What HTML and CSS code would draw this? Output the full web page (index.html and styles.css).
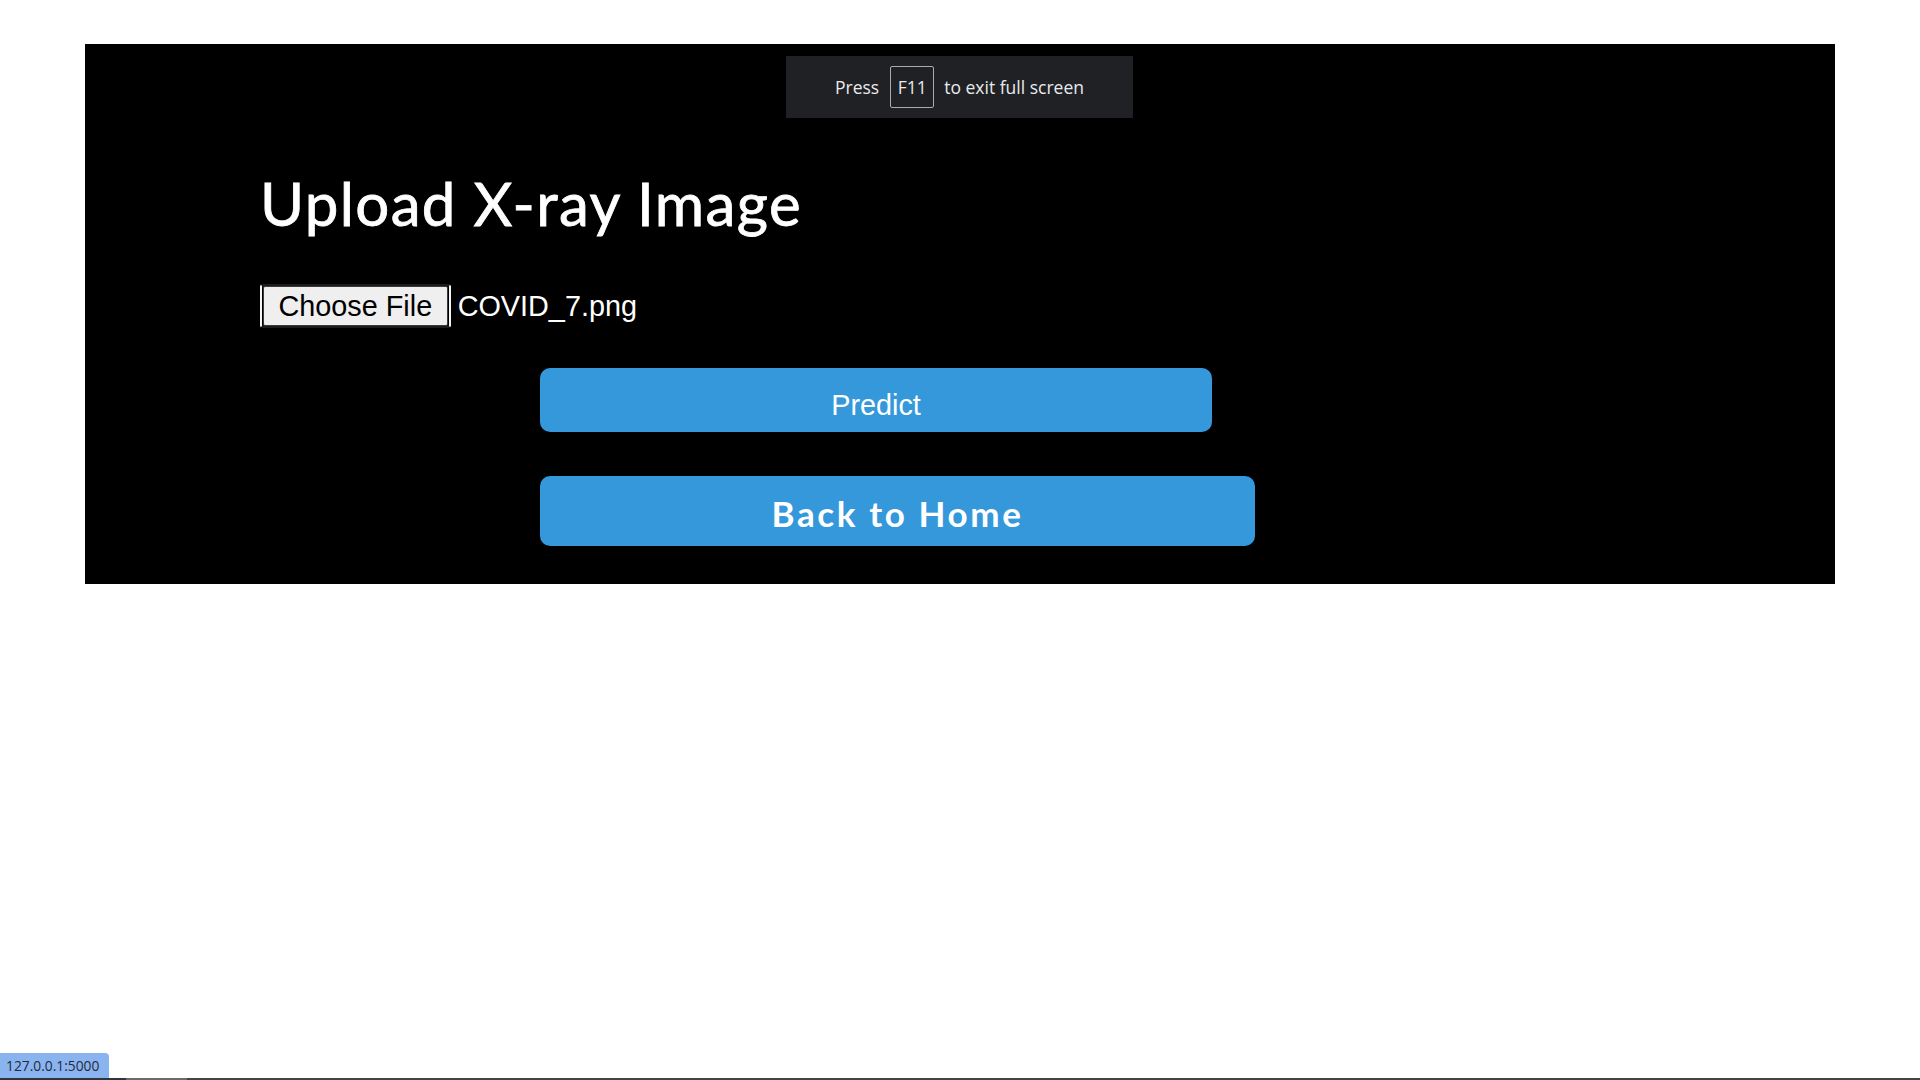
FILE: index.html
```html
<!DOCTYPE html>
<html lang="en">
<head>
<meta charset="utf-8">
<title>Upload X-ray Image</title>
<link rel="stylesheet" href="styles.css">
</head>
<body>
  <main class="screen">
    <h1 class="title">Upload X-ray Image</h1>
    <div class="file-row">
      <span class="file-picker"><span class="choose-btn">Choose File</span></span>
      <span class="file-name">COVID_7.png</span>
    </div>
    <div class="actions">
      <button class="btn-predict" type="button">Predict</button>
      <a class="btn-home" href="#">Back to Home</a>
    </div>
  </main>

  <div class="fs-toast">
    <span class="fs-text">Press</span>
    <span class="fs-key">F11</span>
    <span class="fs-text">to exit full screen</span>
  </div>

  <div class="status-pill">127.0.0.1:5000</div>
  <div class="bottom-line"><span class="seg-a"></span><span class="seg-b"></span><span class="seg-c"></span></div>
</body>
</html>
```

FILE: styles.css
```css
html, body {
  margin: 0;
  padding: 0;
  background: #ffffff;
}

body {
  font-family: "Liberation Sans", Arial, sans-serif;
}

.screen {
  width: 1750px;
  box-sizing: border-box;
  margin: 44px auto 0;
  background: #000000;
  padding: 123px 0 38px 175px;
}

.title {
  margin: 0;
  font-family: Lato, "Open Sans", sans-serif;
  font-weight: 400;
  font-size: 60px;
  line-height: 72px;
  letter-spacing: 1.4px;
  color: #ffffff;
  -webkit-text-stroke: 0.8px #ffffff;
}

.file-row {
  display: flex;
  align-items: center;
  margin-top: 45px;
  height: 44px;
}

.file-picker {
  display: inline-flex;
  align-items: center;
  box-sizing: border-box;
  height: 44px;
  padding: 0 1px;
  border: 2px solid;
  border-color: #1c1c1c #f4f4f4;
  border-radius: 3px;
}

.choose-btn {
  display: block;
  box-sizing: border-box;
  height: 40px;
  padding: 0 14.5px;
  line-height: 38px;
  font-size: 28.8px;
  color: #000000;
  background: #efefef;
  border: 1px solid #3a3a3a;
  border-radius: 2px;
}

.file-name {
  margin-left: 7px;
  font-size: 28.8px;
  color: #ffffff;
}

.actions {
  display: flex;
  flex-direction: column;
  align-items: flex-start;
  margin-left: 280px;
}

.btn-predict {
  display: block;
  box-sizing: border-box;
  width: 672px;
  height: 64px;
  margin-top: 40px;
  padding: 10px 0 0;
  line-height: 54px;
  font-family: "Liberation Sans", Arial, sans-serif;
  font-size: 28.8px;
  color: #ffffff;
  background: #3498db;
  border: none;
  border-radius: 10px;
  text-align: center;
}

.btn-home {
  display: block;
  box-sizing: border-box;
  width: 715px;
  height: 70px;
  margin-top: 44px;
  padding-top: 4px;
  line-height: 66px;
  font-family: Lato, "Open Sans", sans-serif;
  font-weight: 700;
  font-size: 35px;
  letter-spacing: 2.6px;
  color: #ffffff;
  background: #3498db;
  border-radius: 10px;
  text-align: center;
  text-decoration: none;
}

.fs-toast {
  position: fixed;
  top: 56px;
  left: 786px;
  width: 347px;
  height: 62px;
  box-sizing: border-box;
  display: flex;
  align-items: center;
  justify-content: center;
  background: #202124;
  color: #e8eaed;
  font-family: "Open Sans", "Noto Sans", sans-serif;
  font-size: 17.5px;
}

.fs-key {
  display: flex;
  align-items: center;
  justify-content: center;
  box-sizing: border-box;
  width: 44px;
  height: 42px;
  border: 1px solid #a8abb0;
  border-radius: 2px;
  margin: 0 10px 0 11px;
}

.status-pill {
  position: fixed;
  left: 0;
  bottom: 2px;
  height: 25px;
  box-sizing: border-box;
  padding: 0 10px 0 6px;
  line-height: 25px;
  background: #8ab4f0;
  color: #1f2a3a;
  font-family: "Open Sans", "Noto Sans", sans-serif;
  font-size: 13.8px;
  border-top-right-radius: 4px;
}

.bottom-line {
  position: fixed;
  left: 0;
  right: 0;
  bottom: 0;
  height: 2px;
  display: flex;
}

.seg-a { width: 126px; background: #2e3440; }
.seg-b { width: 61px; background: #6a6a6a; }
.seg-c { flex: 1; background: #444444; }
```
